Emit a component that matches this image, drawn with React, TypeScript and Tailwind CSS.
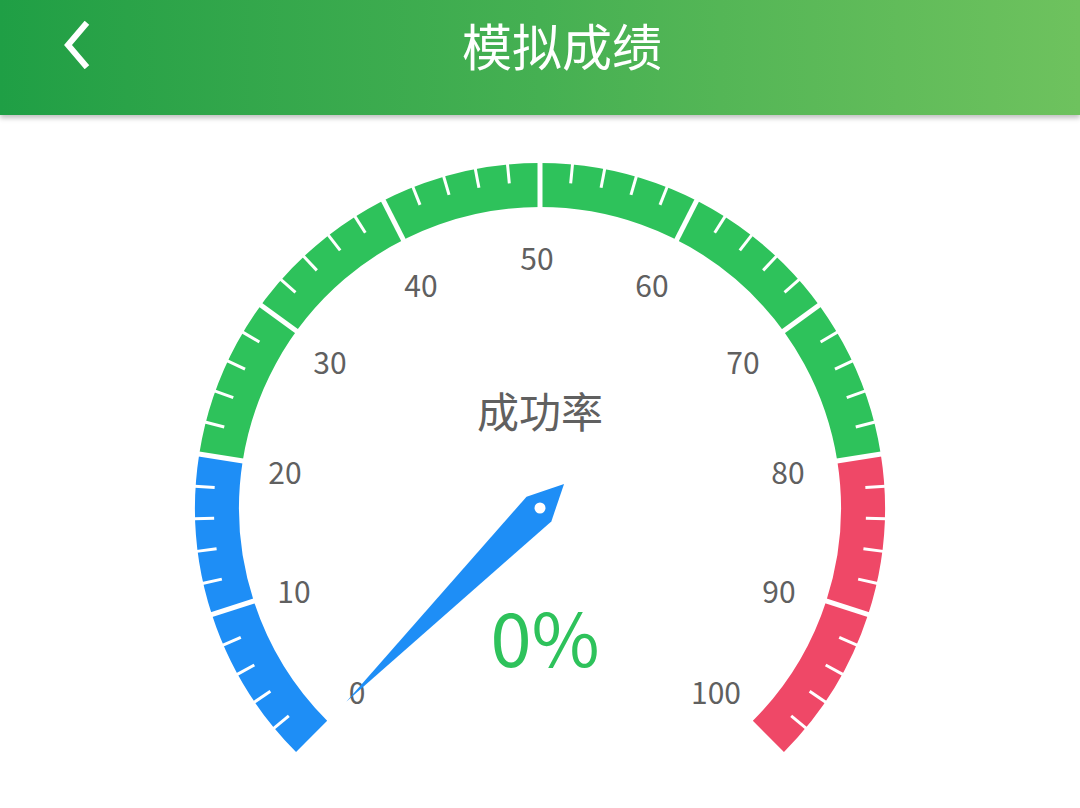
import React from "react";

// gauge geometry (svg coordinates, origin at the top of the content area)
const CX = 540;
const CY = 393;
const R_OUT = 345;
const R_IN = 301;
const START = 225;
const SWEEP = 270;

const BLUE = "#1e8ef6";
const GREEN = "#2ec25b";
const RED = "#ef4867";

const bands = [
  { from: 0, to: 20, color: BLUE },
  { from: 20, to: 80, color: GREEN },
  { from: 80, to: 100, color: RED },
];

const labels: { text: string; x: number; y: number }[] = [
  { text: "0", x: 357, y: 576 },
  { text: "10", x: 294, y: 475 },
  { text: "20", x: 285, y: 356 },
  { text: "30", x: 330, y: 246 },
  { text: "40", x: 421, y: 169 },
  { text: "50", x: 537, y: 142 },
  { text: "60", x: 652, y: 169 },
  { text: "70", x: 743, y: 246 },
  { text: "80", x: 788, y: 356 },
  { text: "90", x: 779, y: 475 },
  { text: "100", x: 716, y: 576 },
];

const rad = (v: number) => ((START - (SWEEP * v) / 100) * Math.PI) / 180;
const pt = (v: number, r: number) => [CX + r * Math.cos(rad(v)), CY - r * Math.sin(rad(v))];

function arc(from: number, to: number, r: number) {
  const [x1, y1] = pt(from, r);
  const [x2, y2] = pt(to, r);
  const large = ((to - from) * SWEEP) / 100 > 180 ? 1 : 0;
  return `M${x1} ${y1} A${r} ${r} 0 ${large} 1 ${x2} ${y2}`;
}

function radial(v: number, r1: number, r2: number) {
  const [x1, y1] = pt(v, r1);
  const [x2, y2] = pt(v, r2);
  return { x1, y1, x2, y2 };
}

function Pointer({ value }: { value: number }) {
  const a = rad(value);
  const u = [Math.cos(a), -Math.sin(a)];
  const n = [-u[1], u[0]];
  const p = (l: number, w: number) => `${CX + u[0] * l + n[0] * w},${CY + u[1] * l + n[1] * w}`;
  const points = [p(274, 0), p(1.5, 17.5), p(-34, 0), p(1.5, -17.5)].join(" ");
  return (
    <g>
      <polygon points={points} fill={BLUE} />
      <circle cx={CX} cy={CY} r={5.5} fill="#ffffff" />
    </g>
  );
}

function Gauge({ value }: { value: number }) {
  const ticks: number[] = [];
  for (let v = 2; v < 100; v += 2) if (v % 10 !== 0) ticks.push(v);
  const splits = [10, 20, 30, 40, 50, 60, 70, 80, 90];

  return (
    <svg width={1080} height={693} viewBox="0 0 1080 693" className="block">
      {bands.map((b) => (
        <path
          key={b.from}
          d={arc(b.from, b.to, (R_OUT + R_IN) / 2)}
          fill="none"
          stroke={b.color}
          strokeWidth={R_OUT - R_IN}
        />
      ))}
      {ticks.map((v) => (
        <line key={v} {...radial(v, R_OUT + 1, R_OUT - 19)} stroke="#ffffff" strokeWidth={3} />
      ))}
      {splits.map((v) => (
        <line key={v} {...radial(v, R_IN - 2, R_OUT + 2)} stroke="#ffffff" strokeWidth={5} />
      ))}
      <g fill="#606060" fontSize={30} fontFamily="'Noto Sans CJK SC', 'Noto Sans', sans-serif" textAnchor="middle">
        {labels.map((l) => (
          <text key={l.text} x={l.x} y={l.y} dominantBaseline="central">
            {l.text}
          </text>
        ))}
      </g>
      <text
        x={540}
        y={294}
        textAnchor="middle"
        dominantBaseline="central"
        fontSize={42}
        fill="#606060"
        fontFamily="'Noto Sans CJK SC', sans-serif"
      >
        成功率
      </text>
      <Pointer value={value} />
      <text
        x={545}
        y={519}
        textAnchor="middle"
        dominantBaseline="central"
        fontSize={74}
        fill={GREEN}
        fontFamily="'Noto Sans CJK SC', 'Noto Sans', sans-serif"
      >
        {value}%
      </text>
    </svg>
  );
}

export default function App() {
  const rate = 0;
  return (
    <div className="w-[1080px] h-[808px] bg-white overflow-hidden" style={{ fontFamily: "'Noto Sans CJK SC', 'Noto Sans', sans-serif" }}>
      <header className="relative h-[115px] flex items-center justify-center bg-gradient-to-r from-[#1f9f45] via-[#45b052] to-[#6ec25e] shadow-[0_3px_5px_rgba(0,0,0,0.25)] z-10">
        <button className="absolute left-[52px] top-[16px] w-[48px] h-[58px] flex items-center justify-center">
          <svg width="30" height="48" viewBox="0 0 30 48" fill="none">
            <path d="M24 4 L7 24 L24 44" stroke="#ffffff" strokeWidth="6" strokeLinecap="square" strokeLinejoin="miter" />
          </svg>
        </button>
        <h1 className="pl-[44px] -mt-[28px] text-[50px] leading-none text-white font-normal">模拟成绩</h1>
      </header>
      <main className="flex justify-center">
        <Gauge value={rate} />
      </main>
    </div>
  );
}
